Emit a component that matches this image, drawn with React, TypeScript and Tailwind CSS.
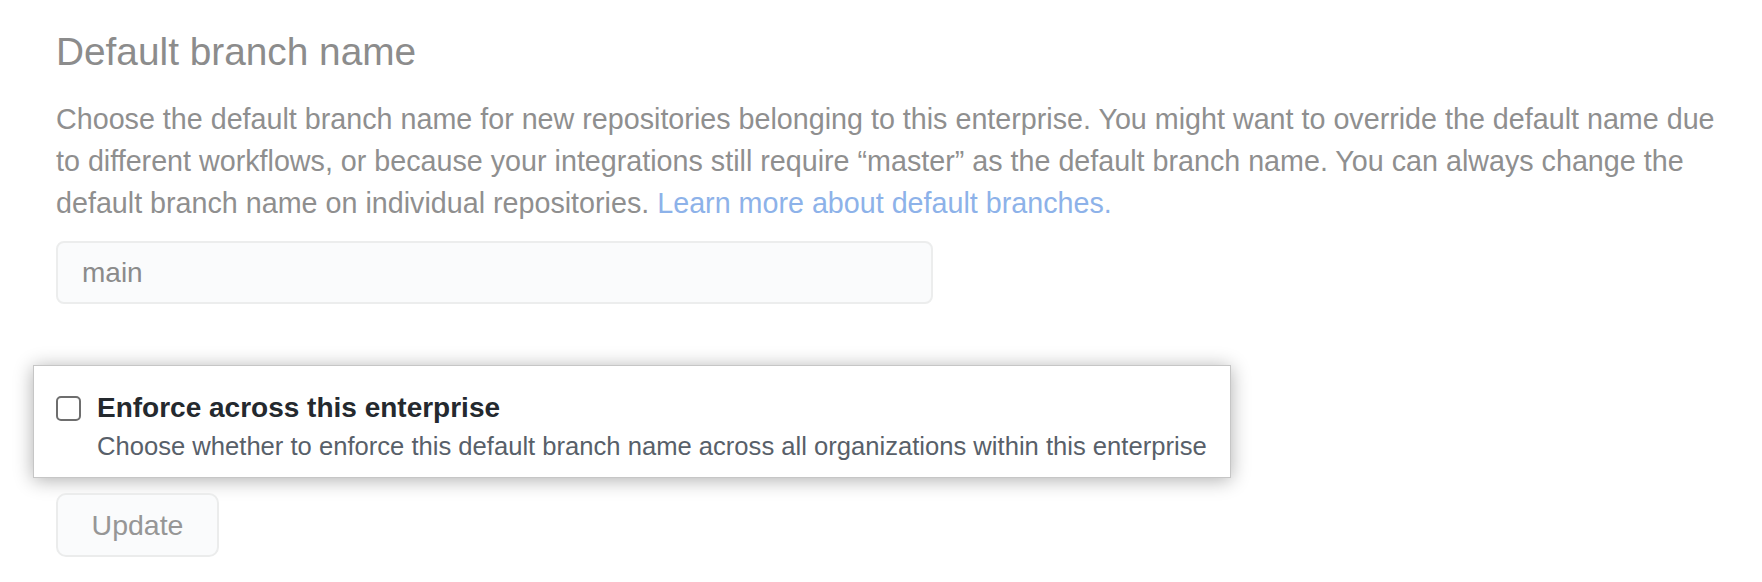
export default function App() {
  return (
    <div className="w-[1762px] h-[582px] bg-white pl-[56px] pt-[28px] font-['Liberation_Sans',Arial,sans-serif] overflow-hidden">
      {/* Heading */}
      <h2 className="text-[38.8px] leading-[48px] text-[#8c8c8c]">Default branch name</h2>

      {/* Description */}
      <p className="mt-[22px] w-[1685px] text-[28.7px] leading-[42px] text-[#8f8f8f]">
        Choose the default branch name for new repositories belonging to this enterprise. You might want to override the
        default name due to different workflows, or because your integrations still require “master” as the default branch
        name. You can always change the default branch name on individual repositories.{" "}
        <a className="text-[#8db2e9]">Learn more about default branches.</a>
      </p>

      {/* Input */}
      <div className="mt-[17px] w-[877px] h-[63px] rounded-[8px] border-2 border-[#eceded] bg-[#fafbfc] px-[24px] flex items-center text-[28px] text-[#8b8b8b]">
        main
      </div>

      {/* Highlighted setting */}
      <div className="mt-[61px] -ml-[23px] w-[1198px] h-[113px] bg-white border border-[#c6c6c6] shadow-[0_2px_18px_rgba(0,0,0,0.32)] pl-[22px] pt-[30px] flex gap-[16px]">
        <div className="w-[25px] h-[25px] rounded-[5px] border-2 border-[#6e6e6e] bg-white shrink-0" />
        <div className="-mt-[6px]">
          <div className="text-[28px] leading-[36px] font-bold text-[#24292e]">Enforce across this enterprise</div>
          <div className="mt-[2px] text-[25.6px] leading-[36px] text-[#586069] whitespace-nowrap">
            Choose whether to enforce this default branch name across all organizations within this enterprise
          </div>
        </div>
      </div>

      {/* Button */}
      <button className="mt-[15px] w-[163px] h-[64px] rounded-[10px] border-2 border-[#ebecec] bg-[#fafbfc] text-[28.5px] text-[#969696] flex items-center justify-center">
        Update
      </button>
    </div>
  )
}
